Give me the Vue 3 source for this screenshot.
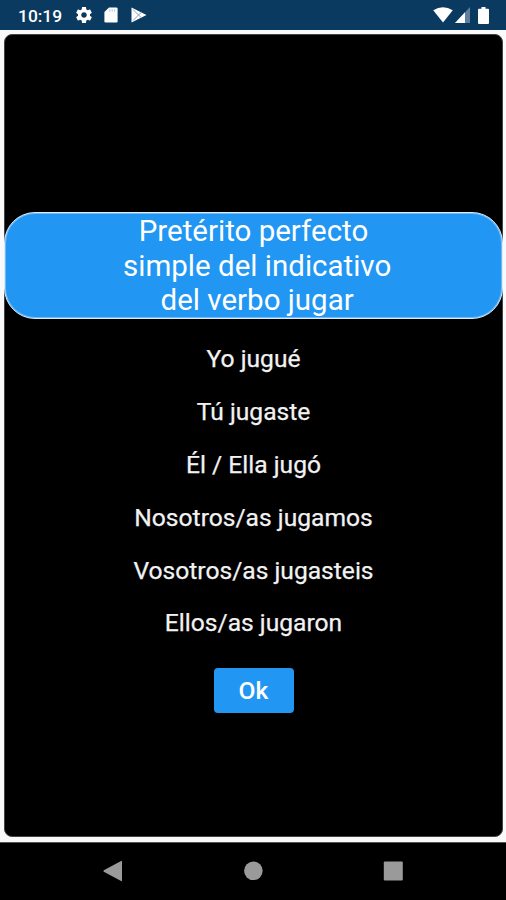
<script setup>
const titleLines = ['Pretérito perfecto', ' simple del indicativo', ' del verbo jugar']
const forms = [
  'Yo jugué',
  'Tú jugaste',
  'Él / Ella jugó',
  'Nosotros/as jugamos',
  'Vosotros/as jugasteis',
  'Ellos/as jugaron',
]
</script>

<template>
  <div class="screen">
    <header class="status">
      <span class="clock">10:19</span>
      <svg class="gear" viewBox="2 2 20 20" width="16" height="16">
        <path fill="#fff" d="M19.43 12.98c.04-.32.07-.64.07-.98s-.03-.66-.07-.98l2.11-1.65c.19-.15.24-.42.12-.64l-2-3.46c-.12-.22-.39-.3-.61-.22l-2.49 1c-.52-.4-1.08-.73-1.69-.98l-.38-2.65C14.46 2.18 14.25 2 14 2h-4c-.25 0-.46.18-.49.42l-.38 2.65c-.61.25-1.17.59-1.69.98l-2.49-1c-.23-.09-.49 0-.61.22l-2 3.46c-.13.22-.07.49.12.64l2.11 1.65c-.04.32-.07.65-.07.98s.03.66.07.98l-2.11 1.65c-.19.15-.24.42-.12.64l2 3.46c.12.22.39.3.61.22l2.49-1c.52.4 1.08.73 1.69.98l.38 2.65c.03.24.24.42.49.42h4c.25 0 .46-.18.49-.42l.38-2.65c.61-.25 1.17-.59 1.69-.98l2.49 1c.23.09.49 0 .61-.22l2-3.46c.12-.22.07-.49-.12-.64l-2.11-1.65zM12 15.5c-1.93 0-3.5-1.57-3.5-3.5s1.57-3.5 3.5-3.5 3.5 1.57 3.5 3.5-1.57 3.5-3.5 3.5z" />
      </svg>
      <svg class="sd" viewBox="0 0 14 16" width="14" height="16">
        <path fill="#fff" d="M5 0.5H12.3Q13.6 0.5 13.6 1.8V14.2Q13.6 15.5 12.3 15.5H1.7Q0.4 15.5 0.4 14.2V5Z" />
        <path stroke="#c3cddc" stroke-width="1" d="M5.8 2v3M8.2 2v3M10.6 2v3" />
      </svg>
      <svg class="play" viewBox="0 0 16 16" width="16" height="16">
        <path fill="#fff" d="M0.5 0.5L15.5 8L0.5 15.5Z" />
        <path fill="none" stroke="#8fa2bb" stroke-width="1" d="M2 2.5L7.5 8L2 13.5M7.5 8L10.5 5.2M7.5 8L10.5 10.8" />
      </svg>
      <span class="spacer"></span>
      <svg class="wifi" viewBox="0 0 20 16" width="20" height="16">
        <path fill="#fff" d="M0.2 3.2Q10 -2.8 19.8 3.2L10 15.5Z" />
      </svg>
      <svg class="signal" viewBox="0 0 15 16" width="15" height="16">
        <path fill="#607f9f" d="M15 0V16H0Z" />
        <path fill="#fff" d="M10 5.3V16H0Z" />
      </svg>
      <svg class="battery" viewBox="0 0 11 17" width="11" height="17">
        <path fill="#fff" d="M3.5 0H7.5V1.7H10Q11 1.7 11 2.7V16Q11 17 10 17H1Q0 17 0 16V2.7Q0 1.7 1 1.7H3.5Z" />
      </svg>
    </header>

    <main class="content">
      <section class="card">
        <h1 class="title">
          <span v-for="line in titleLines" :key="line" class="title-line">{{ line }}</span>
        </h1>
        <ul class="forms">
          <li v-for="form in forms" :key="form">{{ form }}</li>
        </ul>
        <button class="ok" type="button">Ok</button>
      </section>
    </main>

    <nav class="navbar">
      <svg viewBox="0 0 22 22" width="22" height="22"><path fill="#9a9a9a" d="M20 1.2V20.8Q20 21.6 19.1 21.1L1.8 11.7Q1.1 11 1.8 10.3L19.1 0.9Q20 0.4 20 1.2Z" /></svg>
      <svg viewBox="0 0 22 22" width="22" height="22"><circle cx="11.4" cy="10.8" r="9.3" fill="#9a9a9a" /></svg>
      <svg viewBox="0 0 22 22" width="22" height="22"><rect x="1.8" y="1.5" width="19" height="19" rx="1" fill="#9a9a9a" /></svg>
    </nav>
  </div>
</template>

<style>
body {
  margin: 0;
  background: #fff;
}
</style>

<style scoped>
.screen {
  width: 506px;
  height: 900px;
  display: flex;
  flex-direction: column;
  background: #fafafa;
  font-family: Roboto, sans-serif;
  color: #fff;
  overflow: hidden;
}
.status {
  height: 30px;
  flex: none;
  box-sizing: border-box;
  display: flex;
  align-items: center;
  padding: 0 17px 0 18px;
  background: #0b3a61;
}
.clock {
  font-size: 17.4px;
  font-weight: 500;
  line-height: 28px;
  width: 58px;
  padding-top: 1px;
}
.status svg {
  flex: none;
}
.sd {
  margin-left: 12px;
}
.play {
  margin-left: 13px;
}
.spacer {
  flex: 1;
}
.signal {
  margin-left: 2px;
}
.battery {
  margin-left: 8px;
}
.content {
  flex: 1;
  display: flex;
  padding: 4px 3px 5px 4px;
}
.card {
  flex: 1;
  box-sizing: border-box;
  display: flex;
  flex-direction: column;
  align-items: center;
  justify-content: center;
  background: #000;
  border: 1px solid #444;
  border-radius: 8px;
  padding-top: 54px;
}
.title {
  align-self: stretch;
  box-sizing: border-box;
  height: 107px;
  flex: none;
  margin: 0 -1px;
  padding-top: 1px;
  border: 1px solid #d8ecfd;
  box-shadow: inset 0 0 0 1px #6fbaf7;
  border-radius: 31px;
  background: #2196f3;
  text-align: center;
  font-size: 29.5px;
  font-weight: 400;
  line-height: 34.5px;
}
.title-line {
  display: block;
  white-space: pre;
}
.forms {
  list-style: none;
  margin: 14px 0 0;
  padding: 0;
  text-align: center;
  font-size: 24.6px;
  line-height: 52.8px;
  color: #f2f2f2;
  -webkit-text-stroke: 0.25px #f2f2f2;
}
.ok {
  width: 80px;
  height: 45px;
  flex: none;
  margin-top: 17.6px;
  padding: 0;
  border: 0;
  border-radius: 4px;
  background: #2196f3;
  color: #fff;
  font: 500 24.6px Roboto, sans-serif;
}
.navbar {
  height: 58px;
  flex: none;
  box-sizing: border-box;
  display: flex;
  justify-content: center;
  align-items: center;
  gap: 118px;
  padding-bottom: 2px;
  border-top: 1px solid #555;
  background: #000;
}
</style>
